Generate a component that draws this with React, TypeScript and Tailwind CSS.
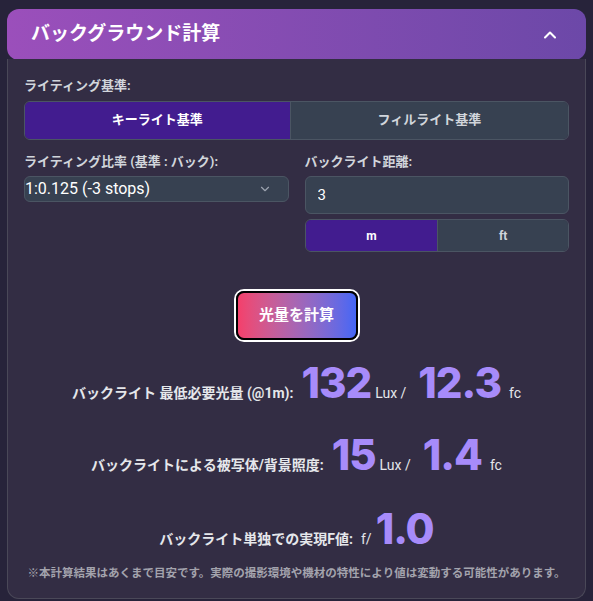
import { useState } from "react";
import { ChevronUp, ChevronDown } from "lucide-react";

const jp = { fontFamily: 'Roboto, "Noto Sans CJK JP", sans-serif' };
const num = { fontFamily: 'Inter, "Noto Sans", sans-serif' };

const App = () => {
  const [basis, setBasis] = useState("key");
  const [unit, setUnit] = useState("m");
  const [distance, setDistance] = useState("3");

  return (
    <div className="min-h-screen bg-[#27233a] px-[7px] pt-[9px]" style={jp}>
      <div className="rounded-xl">
        <div className="flex h-[51px] items-center justify-between rounded-xl bg-gradient-to-r from-[#9b4fbb] to-[#6c48a8] pl-6 pr-[26px] text-white">
          <h2 className="text-[19px] font-bold">バックグラウンド計算</h2>
          <ChevronUp size={20} strokeWidth={2.5} />
        </div>

        <div className="-mt-px rounded-b-xl border border-t-0 border-[#4a4858] bg-[#332d44] px-4 pb-[16px] pt-[17px]">
          <label className="mb-[5px] block text-[13px] font-bold text-[#d1d5db]">ライティング基準:</label>
          <div className="flex h-[39px] overflow-hidden rounded-md border border-[#4b5563]">
            <button
              onClick={() => setBasis("key")}
              className={`flex-auto text-[13px] font-bold ${basis === "key" ? "bg-[#421c8f] text-white" : "bg-[#374151] text-[#d1d5db]"}`}
            >
              キーライト基準
            </button>
            <button
              onClick={() => setBasis("fill")}
              className={`flex-auto border-l border-[#4b5563] text-[13px] font-bold ${basis === "fill" ? "bg-[#421c8f] text-white" : "bg-[#374151] text-[#d1d5db]"}`}
            >
              フィルライト基準
            </button>
          </div>

          <div className="mt-[12px] grid grid-cols-2 gap-4">
            <div>
              <label className="mb-[5px] block text-[13px] font-bold text-[#d1d5db]">ライティング比率 (基準 : バック):</label>
              <div className="flex h-[26px] items-center justify-between rounded-md border border-[#4b5563] bg-[#374151] pr-4 text-white">
                <span className="text-[16px]">1:0.125 (-3 stops)</span>
                <ChevronDown size={14} className="text-[#9ca3af]" />
              </div>
            </div>
            <div>
              <label className="mb-[5px] block text-[13px] font-bold text-[#d1d5db]">バックライト距離:</label>
              <input
                value={distance}
                onChange={(e) => setDistance(e.target.value)}
                className="h-[38px] w-full rounded-md border border-[#4b5563] bg-[#374151] px-3 text-[15px] text-white outline-none"
              />
              <div className="mt-[5px] flex h-[33px] overflow-hidden rounded-md border border-[#4b5563]">
                <button
                  onClick={() => setUnit("m")}
                  className={`flex-auto text-[12px] font-bold ${unit === "m" ? "bg-[#421c8f] text-white" : "bg-[#374151] text-[#d1d5db]"}`}
                >
                  m
                </button>
                <button
                  onClick={() => setUnit("ft")}
                  className={`flex-auto border-l border-[#4b5563] text-[12px] font-bold ${unit === "ft" ? "bg-[#421c8f] text-white" : "bg-[#374151] text-[#d1d5db]"}`}
                >
                  ft
                </button>
              </div>
            </div>
          </div>

          <div className="mt-[39px] flex justify-center">
            <button className="h-[49px] w-[122px] rounded-lg border-2 border-black bg-gradient-to-r from-[#f43f6b] to-[#4466f5] text-[15px] font-bold text-white ring-2 ring-white">
              光量を計算
            </button>
          </div>

          <div className="mt-[13px] flex items-baseline justify-center gap-1 text-[#e5e7eb]">
            <span className="text-[14px] font-bold">バックライト 最低必要光量 (@1m):</span>
            <span className="ml-1 text-[42px] font-extrabold leading-[60px] tracking-tight text-[#a78bfa]" style={num}>132</span>
            <span className="text-[14px]">Lux /</span>
            <span className="ml-2 text-[42px] font-extrabold leading-[60px] tracking-tight text-[#a78bfa]" style={num}>12.3</span>
            <span className="ml-1 text-[14px]">fc</span>
          </div>

          <div className="mt-[12px] flex items-baseline justify-center gap-1 text-[#e5e7eb]">
            <span className="text-[14px] font-bold">バックライトによる被写体/背景照度:</span>
            <span className="ml-1 text-[42px] font-extrabold leading-[60px] tracking-tight text-[#a78bfa]" style={num}>15</span>
            <span className="text-[14px]">Lux /</span>
            <span className="ml-2 text-[42px] font-extrabold leading-[60px] tracking-tight text-[#a78bfa]" style={num}>1.4</span>
            <span className="ml-1 text-[14px]">fc</span>
          </div>

          <div className="mt-[14px] flex items-baseline justify-center gap-1 text-[#e5e7eb]">
            <span className="text-[14px] font-bold">バックライト単独での実現F値:</span>
            <span className="ml-1 text-[14px]">f/</span>
            <span className="text-[42px] font-extrabold leading-[60px] tracking-tight text-[#a78bfa]" style={num}>1.0</span>
          </div>

          <p className="mt-[6px] text-center text-[11.5px] font-bold text-[#a3a3ad]">
            ※本計算結果はあくまで目安です。実際の撮影環境や機材の特性により値は変動する可能性があります。
          </p>
        </div>
      </div>
    </div>
  );
};

export default App;
